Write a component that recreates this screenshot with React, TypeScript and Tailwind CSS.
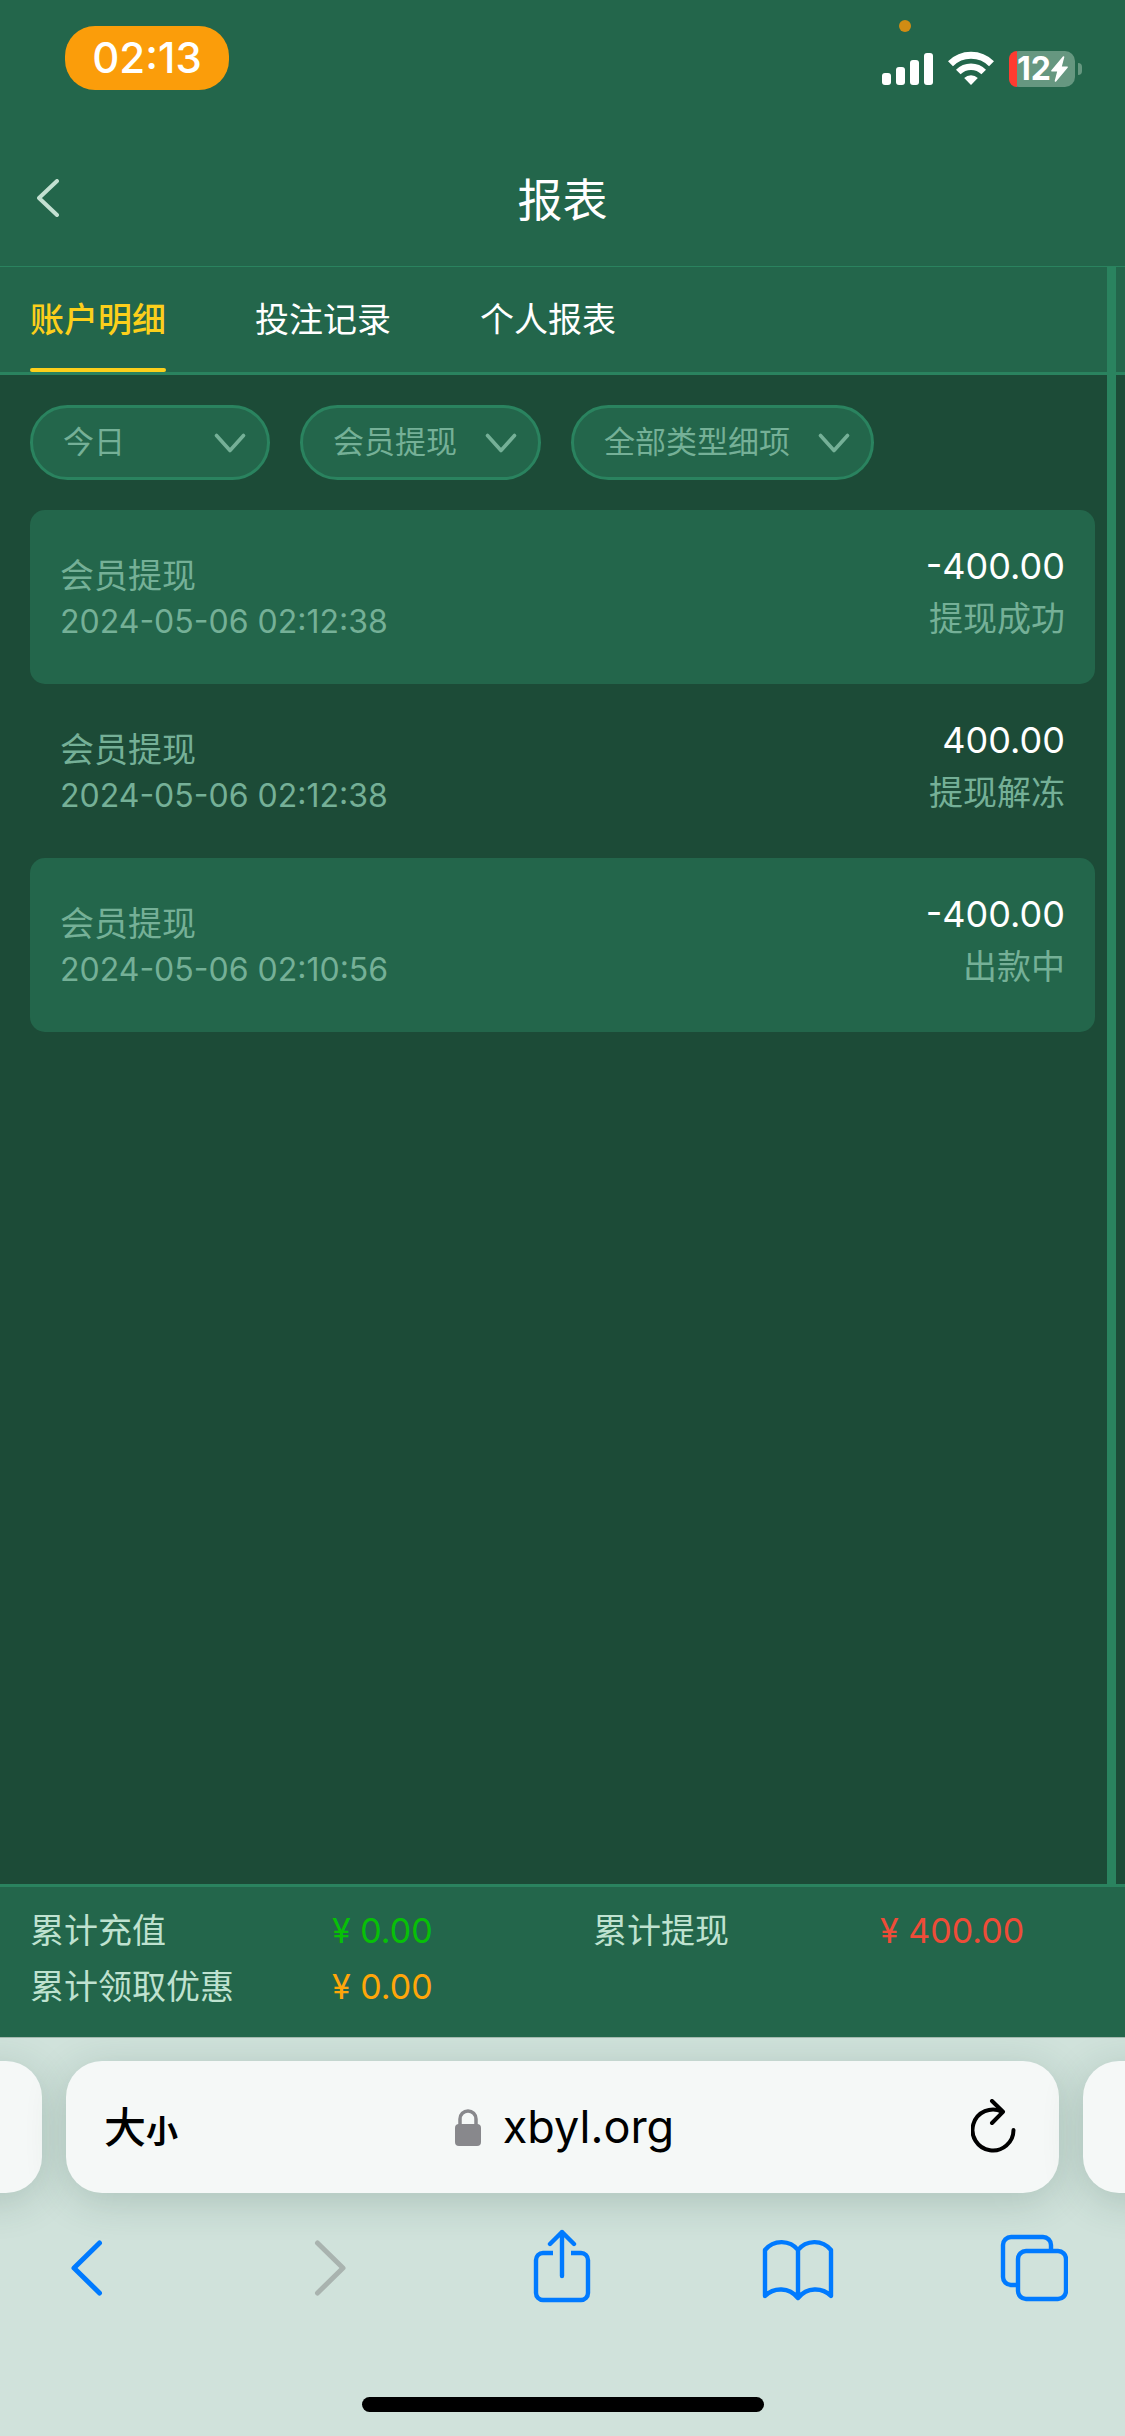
import { useState } from "react";

const tabs = ["账户明细", "投注记录", "个人报表"];

const filters = [
  { label: "日期", width: "w-[240px]", options: ["今日", "昨日", "近七日"] },
  { label: "交易类型", width: "w-[241px]", options: ["会员提现", "会员充值"] },
  { label: "类型细项", width: "w-[303px]", options: ["全部类型细项"] },
];

const records = [
  { title: "会员提现", time: "2024-05-06 02:12:38", amount: "-400.00", status: "提现成功" },
  { title: "会员提现", time: "2024-05-06 02:12:38", amount: "400.00", status: "提现解冻" },
  { title: "会员提现", time: "2024-05-06 02:10:56", amount: "-400.00", status: "出款中" },
];

function StatusBar() {
  return (
    <div className="flex h-24 items-start justify-between pl-[65px] pr-[43px]">
      <div className="mt-[26px] flex h-16 w-[164px] items-center justify-center rounded-[30px] bg-[#fb9d0a] text-[42px] leading-none font-medium text-white">
        02:13
      </div>
      <div className="relative flex items-center gap-[15px] pt-[51px]">
        <span className="absolute top-5 left-[17px] h-3 w-3 rounded-full bg-[#d18c13]" />
        <svg width="51" height="36" viewBox="0 0 51 36" fill="#fff">
          <rect x="0" y="22" width="9" height="12" rx="3" />
          <rect x="14" y="16" width="9" height="18" rx="3" />
          <rect x="28" y="9" width="9" height="25" rx="3" />
          <rect x="42" y="2" width="9" height="32" rx="3" />
        </svg>
        <svg width="46" height="36" viewBox="0 0 46 36" fill="none" stroke="#fff">
          <path d="M2.5 12.8a29 29 0 0 1 41 0" strokeWidth="7" />
          <path d="M10.3 21a18 18 0 0 1 25.4 0" strokeWidth="6.5" />
          <path d="M23 34l-6.8-7a9.6 9.6 0 0 1 13.6 0z" fill="#fff" stroke="none" />
        </svg>
        <div className="flex items-center gap-[3px]">
          <div className="flex h-9 w-[66px] items-center rounded-[10px] bg-[#669780]">
            <span className="h-9 w-2 rounded-l-[10px] bg-[#ff3b30]" />
            <span className="text-[32px] leading-9 font-bold text-white">12</span>
            <svg width="17" height="26" viewBox="0 0 17 26" fill="#fff" stroke="#fff" strokeWidth="1.6" strokeLinejoin="round">
              <path d="M12.5 1L1 14.800h6.200L4.500 25 16 11.200H9.800z" />
            </svg>
          </div>
          <span className="h-3 w-1 rounded-r-full bg-[#669780]" />
        </div>
      </div>
    </div>
  );
}

export default function App() {
  const [activeTab, setActiveTab] = useState(tabs[0]);

  return (
    <div className="flex min-h-screen flex-col bg-[#1c4b37] font-[Inter,'Noto_Sans_CJK_SC',sans-serif]">
      <header className="border-b border-[#2a835f] bg-[#23664b]">
        <StatusBar />
        <div className="grid h-[170px] grid-cols-3 items-center px-[30px] pt-[34px]">
          <button aria-label="返回" className="w-fit px-[7px]">
            <svg width="22" height="38" viewBox="0 0 22 38" fill="none" stroke="#c3e0d1" strokeWidth="4" strokeLinecap="round" strokeLinejoin="round">
              <path d="M20 2L2 19l18 17" />
            </svg>
          </button>
          <h1 className="pt-1 text-center text-[45px] leading-none text-white">报表</h1>
        </div>
      </header>

      <main className="relative flex flex-1 flex-col">
        <nav className="flex gap-[89px] border-b-3 border-[#2a835f] bg-[#23664b] px-[30px]">
          {tabs.map((tab) => (
            <button
              key={tab}
              onClick={() => setActiveTab(tab)}
              className={
                tab === activeTab
                  ? "relative h-[105px] text-[34px] font-medium text-[#fccf1b]"
                  : "relative h-[105px] text-[34px] text-white"
              }
            >
              {tab}
              {tab === activeTab && (
                <span className="absolute inset-x-0 bottom-0 h-1 rounded-full bg-[#fccf1b]" />
              )}
            </button>
          ))}
        </nav>

        <div className="flex gap-[30px] px-[30px] pt-[30px]">
          {filters.map((filter) => (
            <label key={filter.label} className={`relative block ${filter.width}`}>
              <select
                aria-label={filter.label}
                className="h-[75px] w-full appearance-none rounded-full border-3 border-[#2a835f] bg-[#23664b] pl-[30px] text-[31px] text-[#75b097]"
              >
                {filter.options.map((option) => (
                  <option key={option}>{option}</option>
                ))}
              </select>
              <svg className="pointer-events-none absolute top-[28px] right-[24px]" width="32" height="20" viewBox="0 0 32 20" fill="none" stroke="#75b097" strokeWidth="3.600" strokeLinecap="round" strokeLinejoin="round">
                <path d="M2.500 2.500L16 17.500l13.500-15" />
              </svg>
            </label>
          ))}
        </div>

        <ul className="px-[30px] pt-[30px]">
          {records.map((record, i) => (
            <li
              key={i}
              className="flex h-[174px] justify-between rounded-[15px] px-[30px] text-[#75b097] odd:bg-[#23664b]"
            >
              <div className="pt-[43px]">
                <p className="text-[34px] leading-[46px]">{record.title}</p>
                <p className="text-[32px] leading-[46px]">{record.time}</p>
              </div>
              <div className="pt-[31px] text-right">
                <p className="text-4xl leading-[50px] text-white">{record.amount}</p>
                <p className="text-[34px] leading-[56px]">{record.status}</p>
              </div>
            </li>
          ))}
        </ul>

        {/* scroll bar */}
        <span className="absolute inset-y-0 right-[9px] w-[9px] bg-[#2a835f]" />
      </main>

      <footer>
        <dl className="grid h-[153px] grid-cols-[302px_261px_287px_1fr] content-start border-t-3 border-[#2a835f] bg-[#23664b] px-[30px] pt-4 text-[34px] leading-[56px] text-[#bfe2d0]">
          <dt>累计充值</dt>
          <dd className="text-[#07c007]">¥ 0.00</dd>
          <dt>累计提现</dt>
          <dd className="text-[#ef4c38]">¥ 400.00</dd>
          <dt>累计领取优惠</dt>
          <dd className="text-[#ffa60a]">¥ 0.00</dd>
        </dl>

        <div className="overflow-hidden border-t border-[#a3b8ae] bg-[#d0e2db]">
          <div className="-mx-[60px] flex gap-6 pt-[23px]">
            <div className="h-[132px] w-[102px] rounded-[36px] bg-[#f5f8f7] shadow-[0_8px_40px_rgba(30,70,55,0.2)]" />
            <div className="grid h-[132px] flex-1 grid-cols-[1fr_auto_1fr] items-center rounded-[36px] bg-[#f5f8f7] pr-[42px] pl-[38px] text-black shadow-[0_8px_40px_rgba(30,70,55,0.2)]">
              <button className="flex items-baseline font-medium">
                <span className="text-[42px]">大</span>
                <span className="text-[32px] font-bold">小</span>
              </button>
              <a href="https://xbyl.org" className="flex items-center gap-[22px] pl-2 text-[45px]">
                <svg width="26" height="37" viewBox="0 0 26 37">
                  <rect x="0" y="15" width="26" height="22" rx="4" fill="#88888c" />
                  <path d="M5 17V10a8 8 0 0 1 16 0v7" fill="none" stroke="#88888c" strokeWidth="3.500" />
                </svg>
                xbyl.org
              </a>
              <button aria-label="重新载入" className="justify-self-end">
                <svg width="46" height="56" viewBox="0 0 46 56" fill="none" stroke="#000" strokeWidth="4" strokeLinecap="round" strokeLinejoin="round">
                  <path d="M31 12.600A20.500 20.500 0 1 0 42.500 31" />
                  <path d="M21 2l11 10.800L21 24" />
                </svg>
              </button>
            </div>
            <div className="h-[132px] w-[102px] rounded-[36px] bg-[#f5f8f7] shadow-[0_8px_40px_rgba(30,70,55,0.2)]" />
          </div>

          <div className="-mx-[27px] grid h-[204px] grid-cols-5 items-start justify-items-center pt-9">
            <button aria-label="后退">
              <svg width="39" height="78" viewBox="0 0 39 78" fill="none" stroke="#007aff" strokeWidth="5" strokeLinecap="round" strokeLinejoin="round">
                <path d="M28.500 14L3 39l25.500 25" />
              </svg>
            </button>
            <button aria-label="前进" disabled>
              <svg width="39" height="78" viewBox="0 0 39 78" fill="none" stroke="#a9b3af" strokeWidth="5" strokeLinecap="round" strokeLinejoin="round">
                <path d="M10.500 14L36 39 10.500 64" />
              </svg>
            </button>
            <button aria-label="分享">
              <svg width="58" height="78" viewBox="0 0 58 78" fill="none" stroke="#007aff" strokeWidth="4.400" strokeLinejoin="round">
                <path d="M20 24H10a7 7 0 0 0-7 7v33a7 7 0 0 0 7 7h38a7 7 0 0 0 7-7V31a7 7 0 0 0-7-7H38" />
                <path d="M29 47V3M17 15L29 3l12 12" strokeLinecap="round" />
              </svg>
            </button>
            <button aria-label="书签">
              <svg width="72" height="78" viewBox="0 0 72 78" fill="none" stroke="#007aff" strokeWidth="4.400" strokeLinecap="round" strokeLinejoin="round">
                <path d="M36 21C28 11 12 10 3 21v46c9-9 24-9 33 2 9-11 24-11 33-2V21C60 10 44 11 36 21zM36 21v47" />
              </svg>
            </button>
            <button aria-label="标签页">
              <svg width="68" height="78" viewBox="0 0 68 78" fill="none" stroke="#007aff" strokeWidth="4.400">
                <path d="M17 56h-6a8 8 0 0 1-8-8V16a8 8 0 0 1 8-8h32a8 8 0 0 1 8 8v6" />
                <rect x="18" y="22" width="48" height="48" rx="8" />
              </svg>
            </button>
          </div>

          <div className="mx-auto mb-6 h-[15px] w-[402px] rounded-full bg-black" />
        </div>
      </footer>
    </div>
  );
}
